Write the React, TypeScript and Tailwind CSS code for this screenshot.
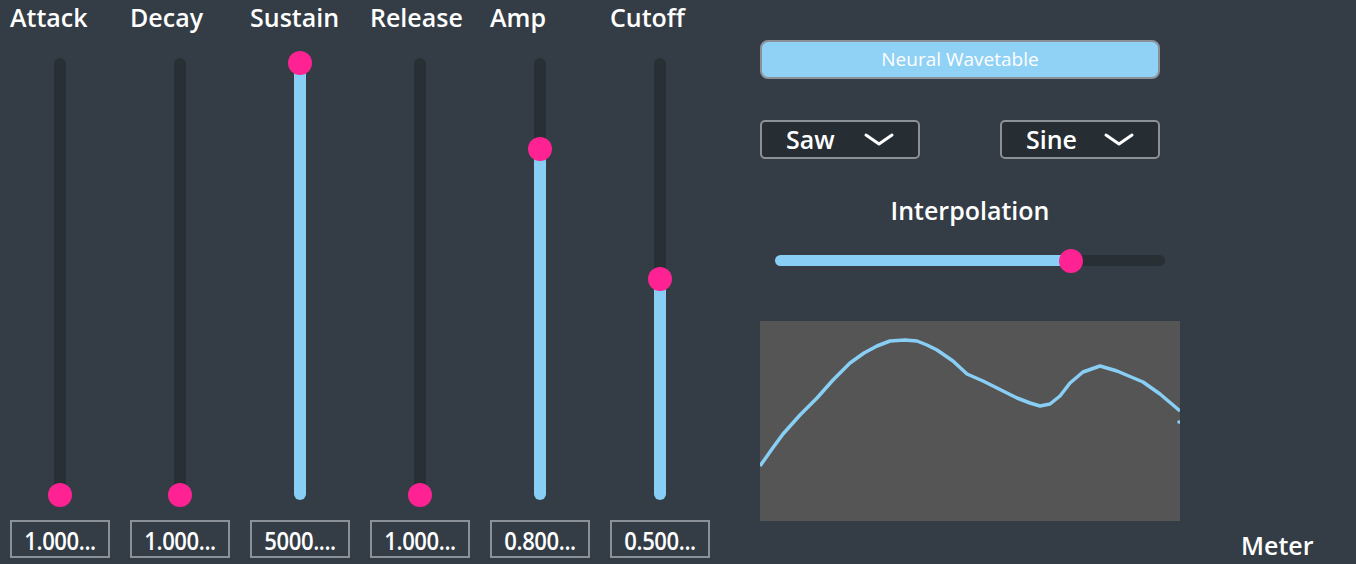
import React from 'react';

const sliders = [
  { name: 'Attack', value: 0, text: '1.000...' },
  { name: 'Decay', value: 0, text: '1.000...' },
  { name: 'Sustain', value: 1, text: '5000....' },
  { name: 'Release', value: 0, text: '1.000...' },
  { name: 'Amp', value: 0.8, text: '0.800...' },
  { name: 'Cutoff', value: 0.5, text: '0.500...' },
];

const font = { fontFamily: '"Open Sans", "DejaVu Sans", sans-serif' };

// waveform points, relative to the 420x200 plot
const wave = [
  [0, 145], [12, 128], [23, 113], [40, 94], [57, 77], [73, 59], [90, 42], [104, 32],
  [117, 25], [130, 20], [145, 19], [157, 20], [167, 24], [177, 29], [193, 40], [207, 53],
  [223, 60], [243, 70], [257, 77], [270, 82], [280, 85], [290, 83], [300, 75], [310, 62],
  [323, 51], [340, 45], [357, 50], [383, 61], [400, 73], [420, 90],
];

function VSlider({ value }: { value: number }) {
  const top = 425 - value * 432;
  return (
    <div className="relative mx-auto h-[442px] w-[12px] rounded-full bg-[#283036]">
      <div
        className="absolute bottom-0 left-0 w-[12px] rounded-b-full bg-[#89cff5]"
        style={{ top: top + 12 }}
      />
      <div
        className="absolute left-[-6px] h-[24px] w-[24px] rounded-full bg-[#fe2292]"
        style={{ top }}
      />
    </div>
  );
}

function Chevron() {
  return (
    <svg width="30" height="14" viewBox="0 0 30 14" className="ml-auto">
      <polyline points="2,2 15,11 28,2" fill="none" stroke="#ffffff" strokeWidth="3" strokeLinecap="round" strokeLinejoin="round" />
    </svg>
  );
}

export default function App() {
  const path = wave.map((p, i) => `${i === 0 ? 'M' : 'L'}${p[0]},${p[1]}`).join(' ');
  return (
    <div className="flex h-[564px] w-[1356px] bg-[#343d45] font-semibold text-white" style={font}>
      {/* Envelope sliders */}
      <div className="flex">
        {sliders.map((s) => (
          <div key={s.name} className="flex w-[120px] flex-col">
            <div className="h-[34px] pl-[10px] text-[25px] leading-[34px]">{s.name}</div>
            <div className="mt-[24px]">
              <VSlider value={s.value} />
            </div>
            <div className="mx-[10px] mt-[20px] flex h-[38px] w-[100px] items-center justify-center border-2 border-[#8b9196]">
              <span className="scale-x-[0.85] pt-[2px] text-[26px] tracking-[-0.5px]">{s.text}</span>
            </div>
          </div>
        ))}
      </div>

      {/* Wavetable panel */}
      <div className="ml-[40px] flex w-[420px] flex-col">
        <div className="mt-[40px] flex h-[39px] w-[400px] items-center justify-center rounded-[8px] border-2 border-[#8b9196] bg-[#90d1f6] text-[19px] font-normal">
          Neural Wavetable
        </div>
        <div className="mt-[41px] flex w-[400px] justify-between">
          {['Saw', 'Sine'].map((w) => (
            <div key={w} className="flex h-[39px] w-[160px] items-center rounded-[5px] border-2 border-[#8b9196] bg-[#262e34] pl-[24px] pr-[24px] text-[25px]">
              {w}
              <Chevron />
            </div>
          ))}
        </div>
        <div className="mt-[34px] text-center text-[25px] leading-[34px]">Interpolation</div>
        <div className="relative ml-[15px] mt-[28px] h-[11px] w-[390px] rounded-full bg-[#283036]">
          <div className="h-[11px] w-[296px] rounded-full bg-[#89cff5]" />
          <div className="absolute left-[284px] top-[-6px] h-[24px] w-[24px] rounded-full bg-[#fe2292]" />
        </div>
        <div className="mt-[55px] h-[200px] w-[420px] bg-[#555555]">
          <svg width="420" height="200" viewBox="0 0 420 200">
            <path d={path} fill="none" stroke="#89cff5" strokeWidth="3.5" strokeLinejoin="round" />
            <circle cx="419" cy="101" r="1.8" fill="#89cff5" />
          </svg>
        </div>
      </div>

      {/* Meter */}
      <div className="flex flex-1 flex-col justify-end pb-[4px] pl-[61px]">
        <div className="text-[25px] leading-[30px]">Meter</div>
      </div>
    </div>
  );
}
